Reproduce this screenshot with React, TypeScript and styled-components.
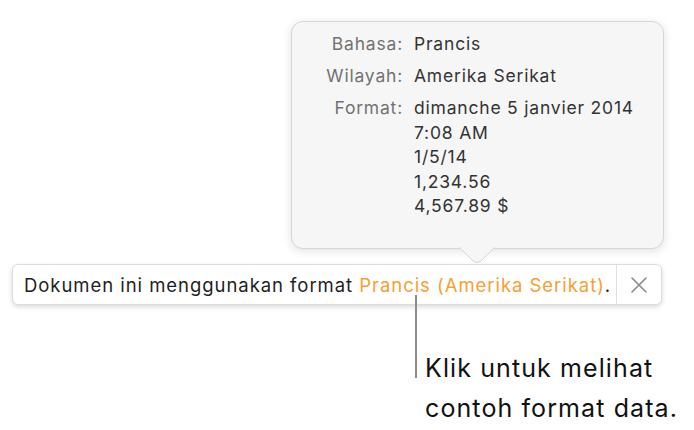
import styled, { createGlobalStyle } from 'styled-components'

const GlobalStyle = createGlobalStyle`
	html, body {
		margin: 0;
		padding: 0;
		background: #ffffff;
	}
	body {
		font-family: 'Inter', 'Liberation Sans', Arial, sans-serif;
		-webkit-font-smoothing: antialiased;
	}
`

const Page = styled.div`
	width: 694px;
	height: 430px;
	display: flex;
	flex-direction: column;
	overflow: hidden;
`

const Popover = styled.div`
	position: relative;
	margin: 21px 0 0 291px;
	width: 373px;
	height: 228px;
	box-sizing: border-box;
	padding-top: 10px;
	background: #f6f6f6;
	border: 1px solid #d6d6d6;
	border-radius: 12px;
	box-shadow: 0 2px 10px rgba(0, 0, 0, 0.12);
`

const Details = styled.dl`
	margin: 0;
	display: grid;
	grid-template-columns: 111px auto;
	column-gap: 11px;
	row-gap: 7.5px;
	font-size: 17.5px;
	letter-spacing: 0.8px;
	line-height: 24.5px;
`

const Label = styled.dt`
	text-align: right;
	color: #727272;
`

const Value = styled.dd`
	margin: 0;
	color: #333333;
	display: flex;
	flex-direction: column;
`

const Arrow = styled.svg`
	position: absolute;
	left: 167px;
	bottom: -19px;
	overflow: visible;
`

const Bar = styled.div`
	margin: 15px 0 0 12px;
	width: 650px;
	height: 41px;
	box-sizing: border-box;
	display: flex;
	align-items: stretch;
	background: #ffffff;
	border: 1px solid #dcdcdc;
	border-radius: 6px;
	box-shadow: 0 2px 5px rgba(0, 0, 0, 0.15);
`

const Message = styled.div`
	flex: 1;
	display: flex;
	align-items: center;
	padding-left: 11px;
	font-size: 18.5px;
	letter-spacing: 0.95px;
	color: #1e1e1e;
	white-space: nowrap;
`

const Accent = styled.span`
	color: #f6a033;
`

const CloseButton = styled.button`
	width: 45px;
	border: none;
	border-left: 1px solid #e0e0e0;
	background: transparent;
	display: flex;
	align-items: center;
	justify-content: center;
	padding: 0;
`

const Callout = styled.div`
	display: flex;
	margin: -10px 0 0 415px;
	gap: 8px;
`

const Leader = styled.div`
	width: 2px;
	height: 83px;
	background: #8c8c8c;
`

const CalloutText = styled.div`
	padding-top: 53px;
	font-size: 25px;
	letter-spacing: 1.1px;
	line-height: 40px;
	color: #111111;
`

export default function App() {
	return (
		<Page>
			<GlobalStyle />
			<Popover>
				<Details>
					<Label>Bahasa:</Label>
					<Value>Prancis</Value>
					<Label>Wilayah:</Label>
					<Value>Amerika Serikat</Value>
					<Label>Format:</Label>
					<Value>
						<span>dimanche 5 janvier 2014</span>
						<span>7:08 AM</span>
						<span>1/5/14</span>
						<span>1,234.56</span>
						<span>4,567.89 $</span>
					</Value>
				</Details>
				<Arrow width="36" height="20" viewBox="0 0 36 20">
					<path d="M0 0 L12 12 Q18 19 24 12 L36 0" fill="#f6f6f6" stroke="#d6d6d6" strokeWidth="1" />
					<rect x="1" y="-2" width="34" height="2.5" fill="#f6f6f6" />
				</Arrow>
			</Popover>
			<Bar>
				<Message>
					Dokumen ini menggunakan format&nbsp;<Accent>Prancis (Amerika Serikat)</Accent>.
				</Message>
				<CloseButton>
					<svg width="18" height="18" viewBox="0 0 18 18">
						<path d="M2 2 L16 16 M16 2 L2 16" stroke="#8a8a8a" strokeWidth="1.6" strokeLinecap="round" />
					</svg>
				</CloseButton>
			</Bar>
			<Callout>
				<Leader />
				<CalloutText>
					Klik untuk melihat
					<br />
					contoh format data.
				</CalloutText>
			</Callout>
		</Page>
	)
}
